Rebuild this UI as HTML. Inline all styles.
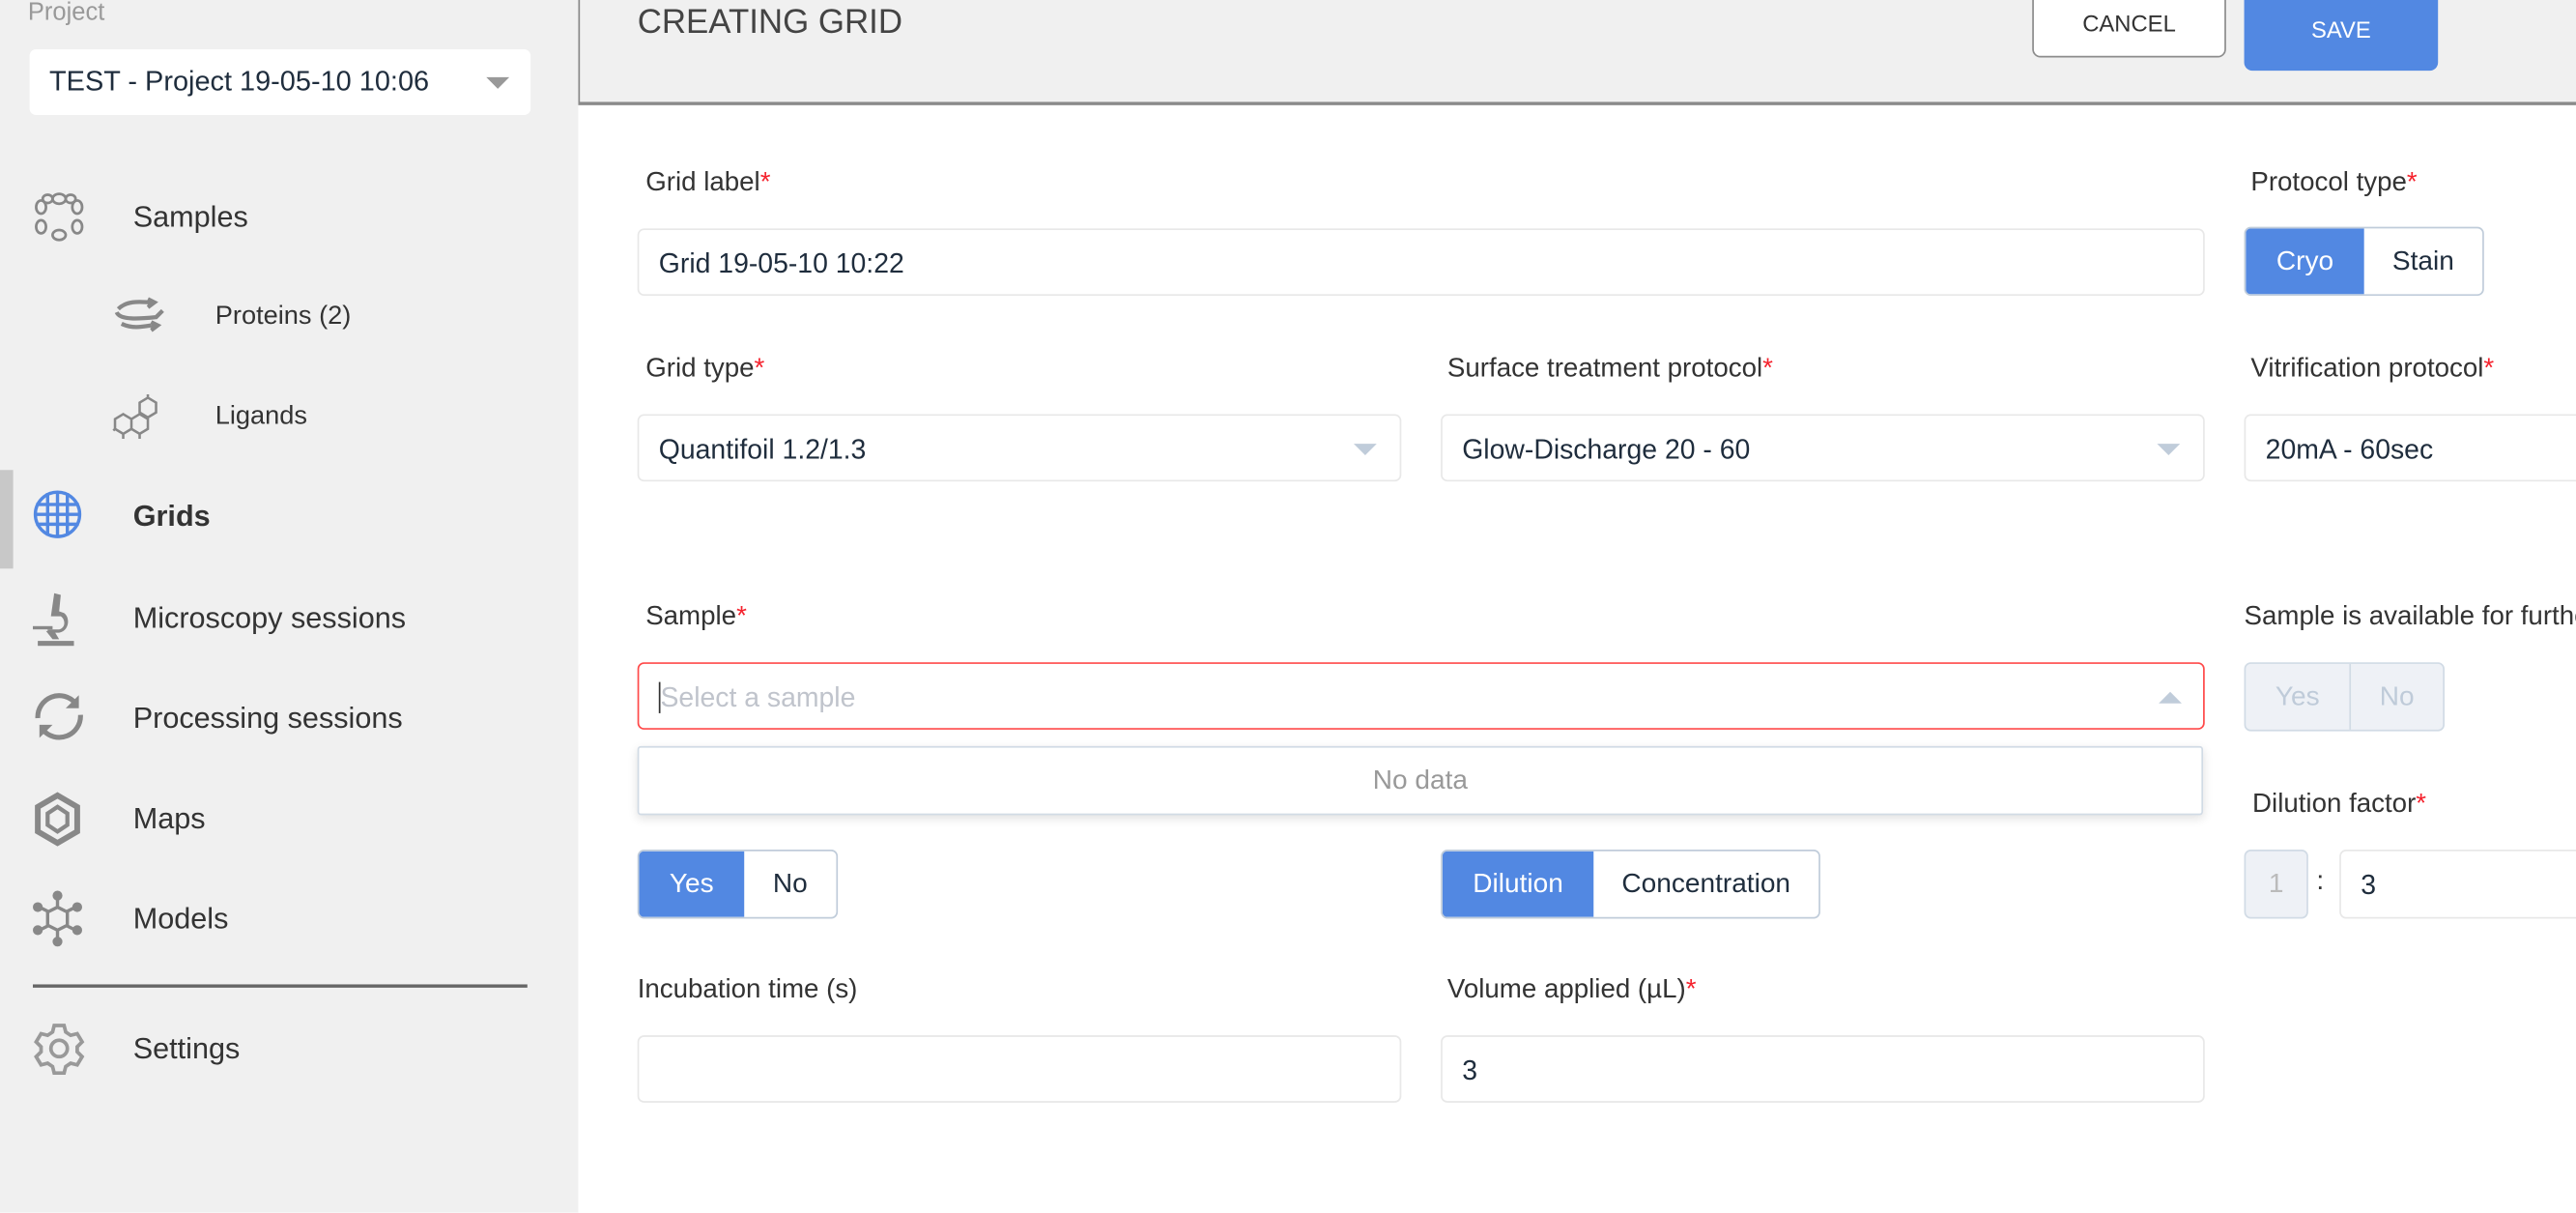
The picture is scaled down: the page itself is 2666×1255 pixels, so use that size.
<!DOCTYPE html>
<html><head><meta charset="utf-8"><style>
*{box-sizing:border-box;margin:0;padding:0}
html,body{width:2666px;height:1254px;overflow:hidden;background:#fff;font-family:"Liberation Sans",Arial,sans-serif}
#w{position:absolute;left:0;top:0;width:1568px;height:738px;transform:scale(1.70026);transform-origin:0 0;overflow:hidden}
.a{position:absolute}
#side{left:0;top:0;width:352px;height:738px;background:#f0f0f0}
.nav{position:absolute;color:#333;font-size:18px;line-height:22px;white-space:nowrap}
.lbl{position:absolute;color:#333;font-size:16.3px;line-height:20px;white-space:nowrap}
.lbl b{color:#f5222d;font-weight:normal}
.inp{position:absolute;background:#fff;border:1px solid #e8e8e8;border-radius:4px;height:41px;font-size:16.7px;color:#1f2d3d;line-height:41px;padding-left:12px;white-space:nowrap}
.caret{position:absolute;right:14px;top:17px;width:0;height:0;border-left:7px solid transparent;border-right:7px solid transparent;border-top:7px solid #c0ccda}
.tg{position:absolute;height:42px;border:1px solid #c0ccda;border-radius:4px;display:flex;overflow:hidden;font-size:16.5px;line-height:40px}
.tg span{text-align:center;color:#1f2d3d}
.tg .on{background:#5288e2;color:#fff}
</style></head><body><div id="w">
<div class="a" id="side">
<div class="a" style="left:17px;top:0;font-size:15px;color:#999;line-height:16px">Project</div>
<div class="a" style="left:18px;top:30px;width:305px;height:40px;background:#fff;border-radius:4px;font-size:17px;color:#1f2d3d;line-height:40px;padding-left:12px">TEST - Project 19-05-10 10:06<div class="a" style="right:13px;top:17px;border-left:7px solid transparent;border-right:7px solid transparent;border-top:7px solid #999"></div></div>

<svg class="a" style="left:20px;top:116px" width="32" height="32" viewBox="0 0 32 32" fill="none" stroke="#888" stroke-width="1.6"><g><ellipse cx="16" cy="5" rx="4" ry="3"/><ellipse cx="27" cy="10" rx="3" ry="4"/><ellipse cx="27" cy="22" rx="3" ry="4"/><ellipse cx="16" cy="27" rx="4" ry="3"/><ellipse cx="5" cy="22" rx="3" ry="4"/><ellipse cx="5" cy="10" rx="3" ry="4"/><ellipse cx="9" cy="5" rx="3" ry="2.5"/><ellipse cx="23" cy="5" rx="3" ry="2.5"/></g></svg>
<div class="nav" style="left:81px;top:121px">Samples</div>

<svg class="a" style="left:68px;top:180px" width="34" height="24" viewBox="0 0 34 24" fill="none" stroke="#888" stroke-width="2.5"><path d="M4 8c6-6 16-4 20-4M3 10c2 5 14 4 24 3l4-4M6 17c6 3 12 2 18 1"/><path d="M22 2l4 2-4 3M24 16l4 2-4 3" fill="#888"/></svg>
<div class="nav" style="left:131px;top:182px;font-size:16px">Proteins (2)</div>

<svg class="a" style="left:68px;top:240px" width="34" height="28" viewBox="0 0 34 28" fill="none" stroke="#888" stroke-width="1.5"><path d="M2 15l5-3 5 3v6l-5 3-5-3zM12 15l5-3 5 3v6l-5 3-5-3zM17 5l5-3 5 3v6l-5 3-5-3zM22 2V-1M7 24v3M17 24v3M2 21l-1 1"/></svg>
<div class="nav" style="left:131px;top:243px;font-size:16px">Ligands</div>

<div class="a" style="left:0;top:286px;width:8px;height:60px;background:#c8c8c8"></div>
<svg class="a" style="left:20px;top:298px" width="30" height="30" viewBox="0 0 30 30" fill="none" stroke="#5288e2" stroke-width="2"><circle cx="15" cy="15" r="13.5"/><path d="M9 2v26M15 1v28M21 2v26M2 9h26M1 15h28M2 21h26"/></svg>
<div class="nav" style="left:81px;top:303px;font-weight:bold">Grids</div>

<svg class="a" style="left:20px;top:360px" width="26" height="34" viewBox="0 0 26 34" fill="#888"><rect x="3" y="30" width="22" height="3"/><rect x="0" y="21" width="12" height="2"/><path d="M13 1l4 1-1 10 3 1c4 3 3 11-3 12l-7 0 0-2 7 0c4-1 4-6 1-8l-3 0-3 0z"/><path d="M8 24l4 5h4l-3-5z"/></svg>
<div class="nav" style="left:81px;top:365px">Microscopy sessions</div>

<svg class="a" style="left:20px;top:420px" width="32" height="32" viewBox="0 0 32 32" fill="none" stroke="#888" stroke-width="3"><path d="M3 17A13 13 0 0 1 26 8M29 15A13 13 0 0 1 6 24"/><path d="M28 3v8h-8z M4 29v-8h8z" fill="#888" stroke="none"/></svg>
<div class="nav" style="left:81px;top:426px">Processing sessions</div>

<svg class="a" style="left:20px;top:482px" width="30" height="34" viewBox="0 0 30 34" fill="none" stroke="#888" stroke-width="3.5"><path d="M15 2l12 7v15l-12 7-12-7V9z"/><path d="M15 9l6 4v7l-6 4-6-4v-7z" stroke-width="2.5"/></svg>
<div class="nav" style="left:81px;top:487px">Maps</div>

<svg class="a" style="left:20px;top:542px" width="30" height="34" viewBox="0 0 30 34" fill="#888" stroke="#888" stroke-width="2"><path d="M15 4v6M15 24v6M4 10l6 3M26 10l-6 3M4 24l6-3M26 24l-6-3M15 10l6 3v8l-6 3-6-3v-8z" fill="none"/><circle cx="15" cy="3" r="2"/><circle cx="15" cy="31" r="2"/><circle cx="3" cy="10" r="2"/><circle cx="27" cy="10" r="2"/><circle cx="3" cy="24" r="2"/><circle cx="27" cy="24" r="2"/></svg>
<div class="nav" style="left:81px;top:548px">Models</div>

<div class="a" style="left:20px;top:599px;width:301px;height:2px;background:#666"></div>
<svg class="a" style="left:20px;top:622px" width="32" height="32" viewBox="0 0 32 32" fill="none" stroke="#999" stroke-width="2.2"><path d="M13 2h6l1 4 3 2 4-1 3 5-3 3v3l3 3-3 5-4-1-3 2-1 4h-6l-1-4-3-2-4 1-3-5 3-3v-3l-3-3 3-5 4 1 3-2z"/><circle cx="16" cy="16" r="5"/></svg>
<div class="nav" style="left:81px;top:627px">Settings</div>
</div>

<div class="a" style="left:352px;top:0;width:1216px;height:64px;background:#f0f0f0;border-left:1px solid #888;border-bottom:2px solid #8a8a8a"></div>
<div class="a" style="left:388px;top:3px;font-size:20.5px;color:#444;line-height:22px">CREATING GRID</div>
<div class="a" style="left:1237px;top:-6px;width:118px;height:41px;background:#fff;border:1px solid #8c8c8c;border-radius:5px;text-align:center;font-size:14px;color:#333;line-height:34px;padding-top:2px">CANCEL</div>
<div class="a" style="left:1366px;top:-6px;width:118px;height:49px;background:#5288e2;border-radius:5px;text-align:center;font-size:14px;color:#fff;line-height:42px;padding-top:3px">SAVE</div>

<div class="lbl" style="left:393px;top:101px">Grid label<b>*</b></div>
<div class="inp" style="left:388px;top:139px;width:954px">Grid 19-05-10 10:22</div>
<div class="lbl" style="left:1370px;top:101px">Protocol type<b>*</b></div>
<div class="tg" style="left:1366px;top:138px;width:146px"><span class="on" style="width:72px">Cryo</span><span style="flex:1">Stain</span></div>

<div class="lbl" style="left:393px;top:214px">Grid type<b>*</b></div>
<div class="inp" style="left:388px;top:252px;width:465px">Quantifoil 1.2/1.3<div class="caret"></div></div>
<div class="lbl" style="left:881px;top:214px">Surface treatment protocol<b>*</b></div>
<div class="inp" style="left:877px;top:252px;width:465px">Glow-Discharge 20 - 60<div class="caret"></div></div>
<div class="lbl" style="left:1370px;top:214px">Vitrification protocol<b>*</b></div>
<div class="inp" style="left:1366px;top:252px;width:240px">20mA - 60sec</div>

<div class="lbl" style="left:393px;top:365px">Sample<b>*</b></div>
<div class="inp" style="left:388px;top:403px;width:954px;border-color:#ff4949;color:#c0c4cc"><span style="border-left:1px solid #333">Select a sample</span><div class="a" style="right:13px;top:17px;border-left:7px solid transparent;border-right:7px solid transparent;border-bottom:7px solid #c0ccda"></div></div>
<div class="a" style="left:388px;top:454px;width:953px;height:42px;background:#fff;border:1px solid #d1dbe5;border-radius:2px;box-shadow:0 2px 6px rgba(0,0,0,.12);text-align:center;font-size:16.5px;color:#999;line-height:40px">No data</div>
<div class="lbl" style="left:1366px;top:365px">Sample is available for further use</div>
<div class="tg" style="left:1366px;top:403px;width:122px;background:#eef1f6;border-color:#d1dbe5"><span style="width:64px;color:#bfcbd9;border-right:1px solid #d1dbe5">Yes</span><span style="flex:1;color:#bfcbd9">No</span></div>

<div class="lbl" style="left:1371px;top:479px">Dilution factor<b>*</b></div>
<div class="tg" style="left:388px;top:517px;width:122px"><span class="on" style="width:64px">Yes</span><span style="flex:1">No</span></div>
<div class="tg" style="left:877px;top:517px;width:231px"><span class="on" style="width:92px">Dilution</span><span style="flex:1">Concentration</span></div>
<div class="a" style="left:1366px;top:517px;width:39px;height:42px;background:#eef1f6;border:1px solid #d1dbe5;border-radius:4px;text-align:center;color:#bbb;font-size:16.5px;line-height:40px">1</div>
<div class="a" style="left:1410px;top:527px;font-size:16.5px;color:#333">:</div>
<div class="inp" style="left:1424px;top:517px;width:200px;height:42px">3</div>

<div class="lbl" style="left:388px;top:592px">Incubation time (s)</div>
<div class="inp" style="left:388px;top:630px;width:465px"></div>
<div class="lbl" style="left:881px;top:592px">Volume applied (µL)<b>*</b></div>
<div class="inp" style="left:877px;top:630px;width:465px">3</div>
</div></body></html>
